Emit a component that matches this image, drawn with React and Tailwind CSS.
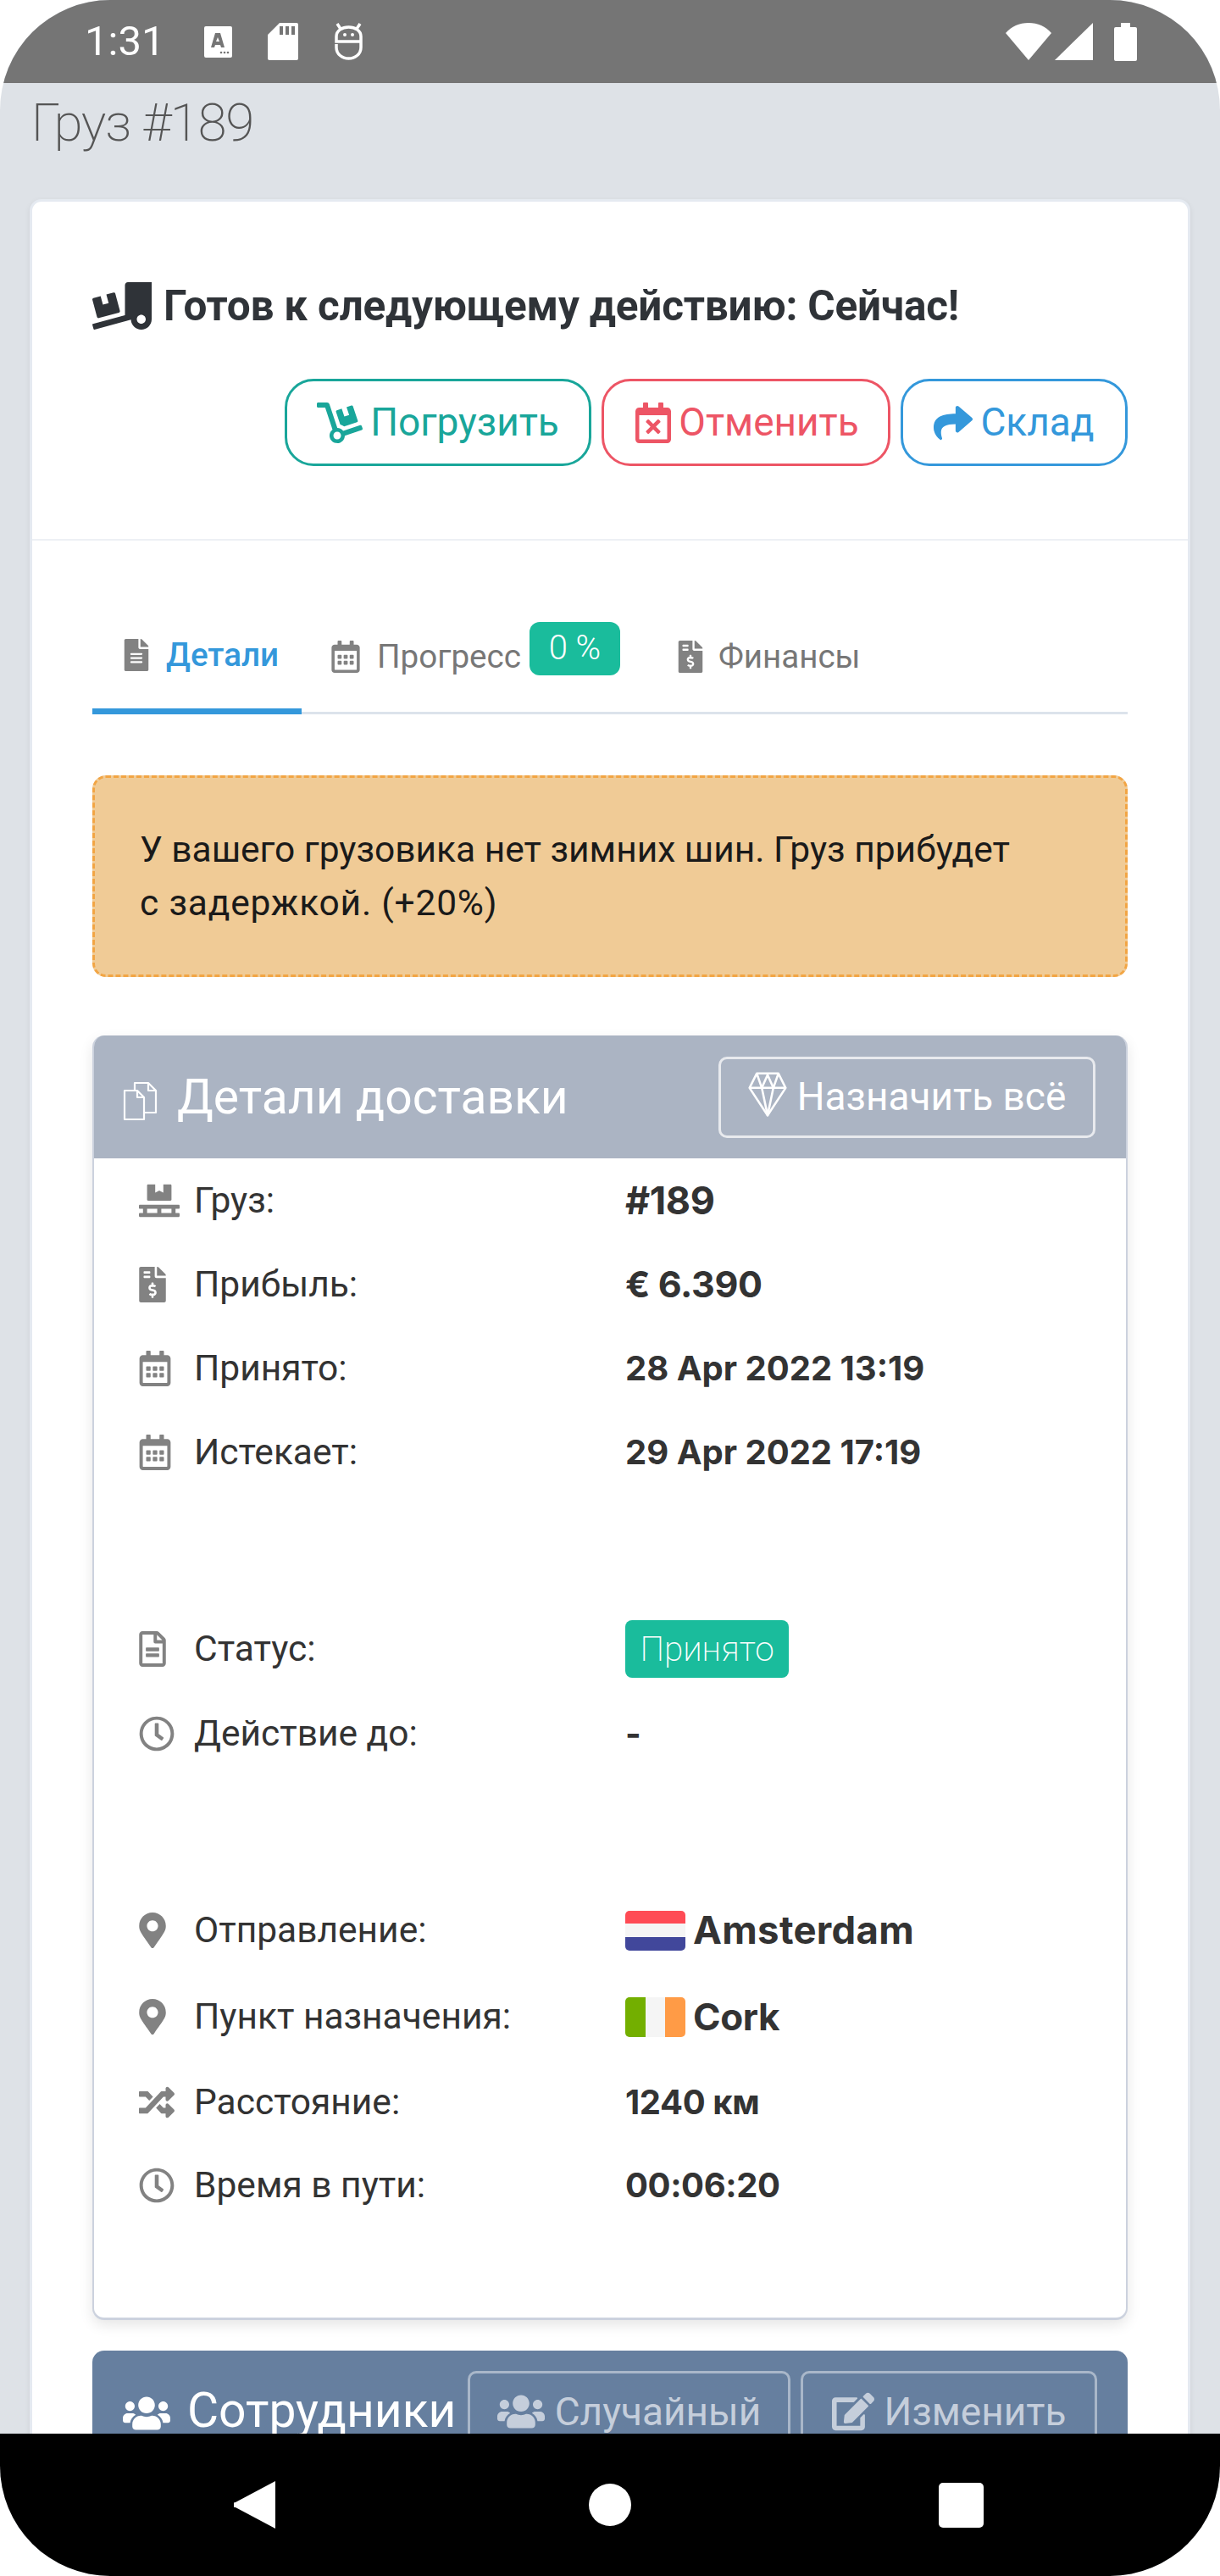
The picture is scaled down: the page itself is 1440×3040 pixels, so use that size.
import React from 'react';
import {
  FaTruckLoading, FaDolly, FaRegCalendarTimes, FaShare, FaFileAlt, FaRegCalendarAlt,
  FaFileInvoiceDollar, FaPallet, FaRegFileAlt, FaRegClock, FaMapMarkerAlt,
  FaRandom, FaUsers, FaEdit,
} from 'react-icons/fa';

const CopyIcon = () => (
  <svg viewBox="0 0 48 48" className="w-[48px] h-[48px] mr-[16px] mt-[8px]" fill="none" stroke="white" strokeWidth="2.2" strokeLinejoin="round">
    <path d="M2 12h15l8 8v26H2z" />
    <path d="M17 12v8h8" />
    <path d="M14 12V3h16l9 9v26H25" />
    <path d="M30 3v9h9" />
  </svg>
);

const GemIcon = () => (
  <svg viewBox="0 0 54 62" className="w-[46px] h-[53px] mr-[12px] mb-[6px]" fill="none" stroke="white" strokeWidth="3" strokeLinejoin="round">
    <path d="M12 2h30l10 20-25 38L2 22z" />
    <path d="M2 22h50M12 2l7 20 8 38 8-38 7-20M19 22l8-18 8 18" />
  </svg>
);

const ActionButton = ({ icon, color, border, width, children }) => (
  <button className={`h-[103px] ${width} ${color} ${border} border-[3px] rounded-[34px] bg-white flex items-center justify-center gap-[9px] text-[46px] font-normal`}>
    {icon}
    <span>{children}</span>
  </button>
);

const Row = ({ icon, label, height = 'h-[99px]', children }) => (
  <div className={`${height} flex items-center`}>
    <div className="w-[65px] text-[#828282] flex items-center">{icon}</div>
    <div className="w-[509px] text-[42.5px] text-[#333333]">{label}</div>
    <div className="flex items-center font-['Inter',sans-serif] font-bold text-[40px] tracking-[-0.4px] text-[#333333]">{children}</div>
  </div>
);

const FlagNl = () => (
  <div className="w-[71px] h-[47px] rounded-[5px] overflow-hidden flex flex-col mr-[9px]">
    <div className="flex-1 bg-[#ff4b55]" />
    <div className="flex-1 bg-[#f5f5f5]" />
    <div className="flex-1 bg-[#41479b]" />
  </div>
);

const FlagIe = () => (
  <div className="w-[71px] h-[47px] rounded-[5px] overflow-hidden flex mr-[9px]">
    <div className="flex-1 bg-[#73af00]" />
    <div className="flex-1 bg-[#f5f5f5]" />
    <div className="flex-1 bg-[#ff9b46]" />
  </div>
);

const StatusBar = () => (
  <div className="h-[98px] shrink-0 bg-[#757575] flex items-center pl-[100px] pr-[98px] text-white">
    <span className="text-[49px] font-normal w-[141px]">1:31</span>
    <svg viewBox="0 0 33 37" className="w-[33px] h-[37px] mr-[42px]">
      <path fillRule="evenodd" fill="white" d="M2 0h29a2 2 0 0 1 2 2v33a2 2 0 0 1-2 2H2a2 2 0 0 1-2-2V2a2 2 0 0 1 2-2zM13 8l-5 17h4l1-3h6l1 3h4L19 8zM14 18l2-5 2 5z" />
      <circle cx="20" cy="31" r="1.300" fill="#757575" />
      <circle cx="24" cy="31" r="1.300" fill="#757575" />
      <circle cx="28" cy="31" r="1.300" fill="#757575" />
    </svg>
    <svg viewBox="0 0 36 44" className="w-[36px] h-[44px] mr-[43px]">
      <path fillRule="evenodd" fill="white" d="M14 0h20a2 2 0 0 1 2 2v40a2 2 0 0 1-2 2H2a2 2 0 0 1-2-2V14zM14 4v10h4V4zM21 4v10h4V4zM28 4v10h4V4z" />
    </svg>
    <svg viewBox="0 0 33 44" className="w-[33px] h-[44px]" fill="none" stroke="white" strokeWidth="3.500">
      <path d="M3 1l4 6M30 1l-4 6" />
      <path d="M2 22v-6C2 9 9 5 16.500 5S31 9 31 16v6H2zM2 25v4c0 8 7 13 14.500 13S31 37 31 29v-7" />
      <circle cx="12" cy="14" r="2" fill="white" stroke="none" />
      <circle cx="21" cy="14" r="2" fill="white" stroke="none" />
    </svg>
    <div className="flex-1" />
    <svg viewBox="0 0 54 44" className="w-[54px] h-[44px] mr-[4px]">
      <path fill="white" d="M27 44L0 12C7 4 16 0 27 0s20 4 27 12z" />
    </svg>
    <svg viewBox="0 0 45 44" className="w-[45px] h-[44px] mr-[25px]">
      <path fill="white" d="M45 0v44H0z" />
    </svg>
    <svg viewBox="0 0 27 45" className="w-[27px] h-[45px]">
      <path fill="white" d="M8 0h11v5h6a2 2 0 0 1 2 2v36a2 2 0 0 1-2 2H2a2 2 0 0 1-2-2V7a2 2 0 0 1 2-2h6z" />
    </svg>
  </div>
);

const NavBar = () => (
  <div className="h-[168px] shrink-0 bg-black flex items-center pl-[276px]">
    <svg viewBox="0 0 49 56" className="w-[49px] h-[56px]">
      <path fill="white" d="M49 0v56L2 31a3 3 0 0 1 0-6z" />
    </svg>
    <div className="w-[50px] h-[50px] rounded-full bg-white ml-[370px]" />
    <div className="w-[53px] h-[53px] rounded-[5px] bg-white ml-[363px]" />
  </div>
);

export default function App() {
  return (
    <div className="w-[1440px] h-[3040px] bg-white">
      <div className="w-full h-full rounded-[130px] overflow-hidden flex flex-col bg-[#dee2e7] font-['Roboto',sans-serif]">
        <StatusBar />

        <main className="flex-1 overflow-hidden px-[35px]">
          <h1 className="text-[62px] font-[200] text-[#555555] leading-[90px] h-[137px] pt-[2px] pl-[2px] tracking-[-1.4px]">Груз #189</h1>

          <div className="bg-white rounded-[14px] border-[3px] border-[#e5eaf1] shadow-[0_2px_6px_rgba(0,0,0,0.08)]">
            {/* action header */}
            <div className="h-[400px] border-b-[2px] border-[#edf0f5] px-[71px] pt-[93px]">
              <div className="flex items-center h-[60px] font-bold text-[#2f3338]">
                <FaTruckLoading className="text-[70px] mr-[14px] shrink-0" />
                <span className="text-[49.5px] tracking-[-0.2px] whitespace-nowrap">Готов к следующему действию: Сейчас!</span>
              </div>
              <div className="flex justify-end gap-[12px] mt-[56px]">
                <ActionButton width="w-[362px]" color="text-[#19a69a]" border="border-[#19a69a]" icon={<FaDolly className="text-[54px]" />}>Погрузить</ActionButton>
                <ActionButton width="w-[341px]" color="text-[#ed5565]" border="border-[#ed5565]" icon={<FaRegCalendarTimes className="text-[48px] -mr-[3px]" />}>Отменить</ActionButton>
                <ActionButton width="w-[268px]" color="text-[#3498db]" border="border-[#3498db]" icon={<FaShare className="text-[46px]" />}>Склад</ActionButton>
              </div>
            </div>

            <div className="px-[71px] pb-[80px]">
              {/* tabs */}
              <div className="mt-[82px] h-[123px] border-b-[3px] border-[#dce3eb] flex text-[38.6px]">
                <div className="w-[247px] h-[123px] border-b-[7px] border-[#3498db] flex items-center pl-[33px] pb-[10px] text-[#3498db] font-medium">
                  <FaFileAlt className="text-[#828282] text-[38px] mr-[16px]" />
                  Детали
                </div>
                <div className="flex items-center pl-[33px] pb-[10px] text-[#777777]">
                  <FaRegCalendarAlt className="text-[#828282] text-[38px] mr-[18px]" />
                  Прогресс
                  <span className="ml-[10px] mb-[20px] w-[107px] h-[63px] rounded-[12px] bg-[#1abc9c] text-white text-[40px] font-light flex items-center justify-center">0 %</span>
                </div>
                <div className="flex items-center pl-[64px] pb-[10px] text-[#777777]">
                  <FaFileInvoiceDollar className="text-[#828282] text-[38px] mr-[14px]" />
                  Финансы
                </div>
              </div>

              {/* warning */}
              <div className="mt-[72px] h-[238px] bg-[#f0cb96] border-[3px] border-dashed border-[#f2a544] rounded-[16px] px-[53px] flex items-center text-[42.5px] leading-[63px] text-[#1a1a1a]">
                <p>У вашего грузовика нет зимних шин. Груз прибудет<br /><span className="tracking-[0.8px]">с задержкой. (+20%)</span></p>
              </div>

              {/* delivery details */}
              <div className="mt-[69px] rounded-[14px] overflow-hidden bg-white border-x-[2px] border-b-[3px] border-[#ccd2de] shadow-[0_6px_16px_rgba(0,0,0,0.1)]">
                <div className="h-[145px] bg-[#abb4c3] flex items-center justify-between pl-[34px] pr-[36px] text-white">
                  <div className="flex items-center text-[57px] font-normal whitespace-nowrap">
                    <CopyIcon />
                    Детали доставки
                  </div>
                  <button className="w-[445px] h-[96px] shrink-0 border-[3px] border-[#e8eaee] rounded-[10px] flex items-center justify-center text-[46px] font-normal whitespace-nowrap">
                    <GemIcon />
                    Назначить всё
                  </button>
                </div>
                <div className="pl-[53px] pr-[40px] pb-[107px]">
                  <Row icon={<FaPallet className="text-[48px]" />} label="Груз:"><span className="text-[45px]">#189</span></Row>
                  <Row icon={<FaFileInvoiceDollar className="text-[42px] -ml-[5px]" />} label="Прибыль:"><span className="text-[43px]">€ 6.390</span></Row>
                  <Row icon={<FaRegCalendarAlt className="text-[42px] -ml-[2px]" />} label="Принято:"><span className="tracking-normal">28 Apr 2022 13:19</span></Row>
                  <Row icon={<FaRegCalendarAlt className="text-[42px] -ml-[2px]" />} label="Истекает:"><span className="tracking-normal">29 Apr 2022 17:19</span></Row>
                  <div className="h-[133px]" />
                  <Row height="h-[100px]" icon={<FaRegFileAlt className="text-[42px] -ml-[5px]" />} label="Статус:">
                    <span className="h-[68px] w-[193px] rounded-[8px] bg-[#1abc9c] text-white text-[40.5px] font-['Roboto',sans-serif] font-[200] tracking-normal flex items-center justify-center">Принято</span>
                  </Row>
                  <Row height="h-[100px]" icon={<FaRegClock className="text-[42px]" />} label="Действие до:">-</Row>
                  <div className="h-[132px]" />
                  <Row height="h-[100px]" icon={<FaMapMarkerAlt className="text-[42px] -ml-[5px]" />} label="Отправление:"><FlagNl /><span className="text-[45.5px] tracking-[0.3px]">Amsterdam</span></Row>
                  <Row height="h-[104px]" icon={<FaMapMarkerAlt className="text-[42px] -ml-[5px]" />} label="Пункт назначения:"><FlagIe /><span className="text-[44px]">Cork</span></Row>
                  <Row height="h-[98px]" icon={<FaRandom className="text-[42px]" />} label="Расстояние:">1240 км</Row>
                  <Row height="h-[98px]" icon={<FaRegClock className="text-[42px]" />} label="Время в пути:">00:06:20</Row>
                </div>
              </div>

              {/* staff */}
              <div className="mt-[36px] rounded-t-[14px] bg-[#667f9f] h-[170px] flex pt-[24px] pl-[36px] pr-[36px] text-white">
                <div className="flex items-start pt-[4px] text-[57px] font-normal flex-1 whitespace-nowrap">
                  <FaUsers className="text-[56px] mr-[20px] mt-[18px]" />
                  Сотрудники
                </div>
                <button className="w-[381px] h-[96px] shrink-0 border-[3px] border-[#a9b7c9] rounded-[10px] flex items-center justify-center text-[46px] font-normal text-[#c5cedb] mr-[12px]">
                  <FaUsers className="text-[56px] mr-[12px]" />
                  Случайный
                </button>
                <button className="w-[350px] h-[96px] shrink-0 border-[3px] border-[#a9b7c9] rounded-[10px] flex items-center justify-center text-[46px] font-normal text-[#c5cedb]">
                  <FaEdit className="text-[50px] mr-[12px]" />
                  Изменить
                </button>
              </div>
            </div>
          </div>
        </main>

        <NavBar />
      </div>
    </div>
  );
}
